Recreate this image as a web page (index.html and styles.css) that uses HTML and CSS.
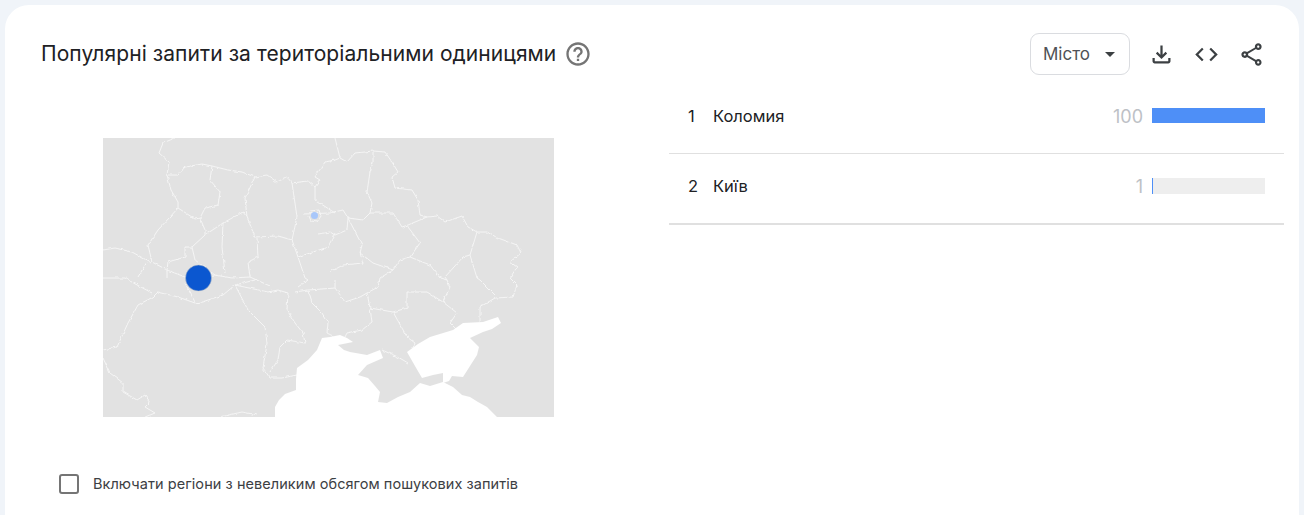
FILE: index.html
```html
<!DOCTYPE html>
<html lang="uk">
<head>
<meta charset="utf-8">
<title>Популярні запити</title>
<link rel="stylesheet" href="styles.css">
</head>
<body>
<main class="card">
  <header class="head">
    <div class="title-wrap">
      <h2 class="title">Популярні запити за територіальними одиницями</h2>
      <svg class="help" viewBox="0 0 24 24"><path d="M11 18h2v-2h-2v2zm1-16C6.48 2 2 6.48 2 12s4.48 10 10 10 10-4.48 10-10S17.52 2 12 2zm0 18c-4.41 0-8-3.59-8-8s3.59-8 8-8 8 3.59 8 8-3.59 8-8 8zm0-14c-2.21 0-4 1.79-4 4h2c0-1.1.9-2 2-2s2 .9 2 2c0 2-3 1.75-3 5h2c0-2.25 3-2.5 3-5 0-2.21-1.79-4-4-4z"/></svg>
    </div>
    <div class="tools">
      <div class="select"><span>Місто</span><i class="caret"></i></div>
      <div class="icons">
        <svg class="icon" viewBox="0 0 24 24"><path d="M18 15v3H6v-3H4v3c0 1.1.9 2 2 2h12c1.1 0 2-.9 2-2v-3h-2zm-1-4l-1.41-1.41L13 12.17V4h-2v8.17L8.41 9.59 7 11l5 5 5-5z"/></svg>
        <svg class="icon" viewBox="0 0 24 24"><path d="M9.4 16.6L4.8 12l4.6-4.6L8 6l-6 6 6 6 1.4-1.4zm5.2 0l4.6-4.6-4.6-4.6L16 6l6 6-6 6-1.4-1.4z"/></svg>
        <svg class="icon" viewBox="0 0 24 24"><path d="M18 16.08c-.76 0-1.44.3-1.96.77L8.91 12.7c.05-.23.09-.46.09-.7s-.04-.47-.09-.7l7.05-4.11c.54.5 1.25.81 2.04.81 1.66 0 3-1.34 3-3s-1.34-3-3-3-3 1.34-3 3c0 .24.04.47.09.7L8.04 9.81C7.5 9.31 6.79 9 6 9c-1.66 0-3 1.34-3 3s1.34 3 3 3c.79 0 1.5-.31 2.04-.81l7.12 4.16c-.05.21-.08.43-.08.65 0 1.61 1.31 2.92 2.92 2.92s2.92-1.31 2.92-2.92-1.31-2.92-2.92-2.92zM18 4c.55 0 1 .45 1 1s-.45 1-1 1-1-.45-1-1 .45-1 1-1zM6 13c-.55 0-1-.45-1-1s.45-1 1-1 1 .45 1 1-.45 1-1 1zm12 7.02c-.55 0-1-.45-1-1s.45-1 1-1 1 .45 1 1-.45 1-1 1z"/></svg>
      </div>
    </div>
  </header>
  <div class="content">
    <section class="left">
      <svg class="map" viewBox="103 138 451 279">
        <defs>
          <filter id="jitter" x="-5%" y="-5%" width="110%" height="110%">
            <feTurbulence type="fractalNoise" baseFrequency="0.2" numOctaves="2" seed="7"/>
            <feDisplacementMap in="SourceGraphic" scale="3" xChannelSelector="R" yChannelSelector="G"/>
            <feGaussianBlur stdDeviation="0.3"/>
          </filter>
          <filter id="soft" x="-5%" y="-5%" width="110%" height="110%">
            <feGaussianBlur stdDeviation="0.5"/>
          </filter>
        </defs>
        <rect class="land" x="103" y="138" width="451" height="279"/>
        <g class="borders" filter="url(#jitter)">
          <polyline points="175,138 163,143 159,153 169,162 167,175 171,190 178,202 178,208 170,217 158,230 148,245 152,262 167,270 185,277 215,275 232,278 250,277 270,286"/>
          <polyline points="167,175 178,175 185,167 202,164 212,166 228,170 242,172 255,177 267,175 277,182 287,177 292,183 308,181 315,187"/>
          <polyline points="212,166 210,180 220,192 218,205 205,208 200,218 205,230"/>
          <polyline points="178,208 195,219 200,218"/>
          <polyline points="255,177 245,198 247,217 255,237 278,236 292,240"/>
          <polyline points="205,235 223,223 243,212 247,217"/>
          <polyline points="205,230 205,235 192,247 195,260 215,275"/>
          <polyline points="223,223 222,247 225,273"/>
          <polyline points="257,238 258,257 248,262 250,277"/>
          <polyline points="192,247 185,247 185,257 168,262 167,270 167,278"/>
          <polyline points="292,183 297,217 292,240 298,257 305,278 308,280"/>
          <polyline points="298,257 328,247 335,233"/>
          <polyline points="315,187 315,200 335,213"/>
          <polyline points="335,160 325,162 315,177 320,180 315,187"/>
          <polyline points="103,250 115,248 132,252 150,262"/>
          <polyline points="103,278 125,278 128,280 152,293"/>
          <polyline points="147,262 138,277"/>
          <polyline points="103,350 117,347 128,323 138,305 153,297 158,292 178,297 195,303 202,302 223,295 235,285 248,310 265,327 267,343 263,368 270,378 282,378 297,375"/>
          <polyline points="185,283 195,302"/>
          <polyline points="103,358 110,373 123,383 123,392 137,400 145,395 150,402 145,407 155,413 145,417"/>
          <polyline points="220,417 242,412 258,415"/>
          <polyline points="235,285 268,292 278,290 288,293 287,310 295,323 303,333 305,343 287,340 280,347 278,360 270,372"/>
          <polyline points="235,285 255,280"/>
          <polyline points="295,292 308,290 335,288"/>
          <polyline points="308,290 312,303 322,313 328,323 327,333 335,337"/>
          <polyline points="298,287 308,280"/>
          <polyline points="335,138 340,158 347,162 355,153 373,151 385,152 392,162 398,172 392,177 395,188 412,190 418,200 420,215 427,217 437,216 445,222 462,216 468,227 477,232 487,232 498,238 517,245 521,253 510,262 517,267 510,278 512,280 517,285 513,297 495,298 480,307 480,322"/>
          <polyline points="330,162 340,158"/>
          <polyline points="373,162 370,172 367,192 372,203 370,213 393,213 402,227 408,225 427,217"/>
          <polyline points="373,151 373,162"/>
          <polyline points="303,214 330,213 343,210 348,218 363,220 370,213"/>
          <polyline points="348,218 347,230 335,235 330,232 318,234"/>
          <polyline points="348,218 362,245 360,253 373,263 393,270 400,260 410,257 430,265 440,278 447,280 450,287 443,302"/>
          <polyline points="408,227 420,243 410,257"/>
          <polyline points="477,232 470,255 477,278 480,280 495,295"/>
          <polyline points="470,255 463,257 445,277 447,280"/>
          <polyline points="330,272 343,265 363,263 360,253"/>
          <polyline points="393,270 380,278 378,287 367,293 360,297 345,302 338,292 335,288 335,280"/>
          <polyline points="367,293 370,308 372,322 362,330 347,333 345,337"/>
          <polyline points="370,308 393,312 407,308 407,292 427,292 443,302 457,313 450,323 457,330"/>
          <polyline points="393,312 407,337 415,343 412,350"/>
          <polyline points="382,350 398,357 408,363"/>
          <polyline points="310,211 319,210 321,216 317,222 311,221 309,216"/>
        </g>
        <g filter="url(#soft)">
          <path class="sea" d="M275 420 275 407 279 400 285 394 296 390 296 379 297 368 308 360 317 350 322 338 330 337 340 335 347 338 353 342 338 345 344 350 350 352 367 355 380 350 383 358 367 365 358 375 368 378 375 386 380 392 378 402 387 403 398 397 410 392 420 383 430 386 443 382 453 387 462 395 470 397 478 402 487 407 500 420Z"/>
          <path class="sea" d="M407 352 415 366 422 378 433 375 443 373 443 383 449 381 452 376 463 377 470 366 477 355 479 347 470 338 483 332 492 329 501 323 498 317 483 322 463 323 453 330 430 337 418 344Z"/>
        </g>
        <circle class="dot-small" cx="314.5" cy="215.5" r="3.5"/>
        <circle class="dot-big" cx="198.5" cy="278" r="13"/>
      </svg>
      <label class="check">
        <span class="box"></span>
        <span class="check-text">Включати регіони з невеликим обсягом пошукових запитів</span>
      </label>
    </section>
    <ol class="list">
      <li class="row">
        <span class="rank">1</span><span class="name">Коломия</span><span class="val">100</span>
        <span class="track track-first"><span class="fill fill-full"></span></span>
      </li>
      <li class="row row-last">
        <span class="rank">2</span><span class="name">Київ</span><span class="val">1</span>
        <span class="track"><span class="fill fill-one"></span></span>
      </li>
    </ol>
  </div>
</main>
</body>
</html>
```
FILE: styles.css
```css
* { box-sizing: border-box; }
html, body { margin: 0; height: 515px; overflow: hidden; }
body { background: #f0f4f9; padding: 5px 5px 0; font-family: Inter, Roboto, sans-serif; color: #202124; }
.card { background: #fff; border-radius: 24px 24px 0 0; height: 510px; padding-top: 28px; overflow: hidden; }
.head { display: flex; justify-content: space-between; align-items: center; height: 42px; padding: 0 34px 0 36px; }
.title-wrap { display: flex; align-items: center; gap: 8px; }
.title { margin: 0; font-size: 21px; letter-spacing: .07px; font-weight: 400; line-height: 28px; color: #202124; }
.help { width: 28px; height: 28px; fill: #757575; }
.tools { display: flex; align-items: center; gap: 18px; }
.select { width: 100px; height: 42px; border: 1px solid #dadce0; border-radius: 9px; display: flex; align-items: center; justify-content: space-between; padding: 0 14px 0 12px; font-size: 17px; color: #4f5256; }
.caret { width: 0; height: 0; border-left: 5px solid transparent; border-right: 5px solid transparent; border-top: 5px solid #3c4043; }
.icons { display: flex; gap: 18px; }
.icon { width: 27px; height: 27px; fill: #3c4043; display: block; }
.content { display: grid; grid-template-columns: 664px 1fr; padding-right: 15px; }
.left { padding: 63px 0 0 54px; }
.map { display: block; width: 451px; height: 279px; margin-left: 44px; }
.land { fill: #e2e2e2; }
.borders { fill: none; stroke: #f6f6f6; stroke-width: .95; stroke-linejoin: round; }
.sea { fill: #fff; }
.dot-small { fill: #a8c7fa; }
.dot-big { fill: #0b57d0; stroke: #c4c7c5; stroke-width: .5; }
.check { display: flex; align-items: center; gap: 14px; margin-top: 56px; }
.box { width: 20px; height: 20px; border: 2px solid #757575; border-radius: 3px; }
.check-text { font-size: 14.5px; letter-spacing: .06px; line-height: 22px; color: #3c4043; }
.list { list-style: none; margin: 9px 0 0; padding: 0; }
.row { display: flex; align-items: flex-start; height: 70px; padding: 24px 19px 0; border-bottom: 1px solid #e0e0e0; }
.row-last { height: 71px; border-bottom-width: 2px; }
.rank { width: 25px; font-size: 16.5px; line-height: 16px; color: #202124; }
.name { flex: 1; font-size: 16.5px; line-height: 16px; color: #202124; }
.val { font-size: 18px; line-height: 18px; color: #bdc1c6; margin-right: 9px; }
.track { display: block; width: 113px; height: 16px; background: #eee; }
.track-first { height: 15px; }
.fill { display: block; height: 100%; background: #4e8ff7; }
.fill-full { width: 100%; }
.fill-one { width: 1px; }
```
